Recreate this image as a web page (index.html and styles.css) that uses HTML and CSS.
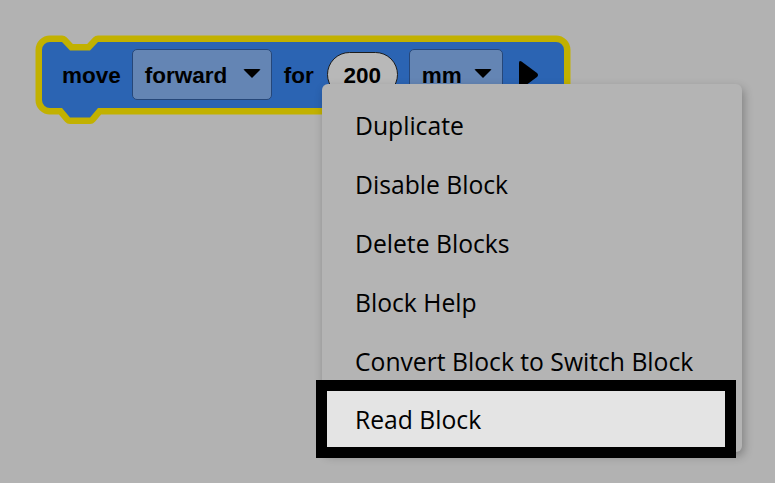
FILE: index.html
```html
<!DOCTYPE html>
<html>
<head>
<meta charset="utf-8">
<link rel="stylesheet" href="styles.css">
</head>
<body>
<div class="workspace">
  <div class="block">
    <svg class="block-shape" width="775" height="140" viewBox="0 0 775 140">
      <path d="M 50 42 H 62 L 70 50.5 H 90 L 98 42 H 556 A 8 8 0 0 1 564 50 V 100 A 8 8 0 0 1 556 108 H 98 L 90 117.5 H 70 L 62 108 H 50 A 8 8 0 0 1 42 100 V 50 A 8 8 0 0 1 50 42 Z" fill="#2b64b3" stroke="#c2b100" stroke-width="13" stroke-linejoin="round" paint-order="stroke"/>
    </svg>
    <div class="fields">
      <span class="label label-move">move</span>
      <span class="dropdown dd-forward"><span class="dd-text">forward</span><span class="caret"></span></span>
      <span class="label label-for">for</span>
      <span class="number"><span class="num-text">200</span></span>
      <span class="dropdown dd-mm"><span class="dd-text">mm</span><span class="caret"></span></span>
      <svg class="play" width="21" height="30" viewBox="0 0 21 30"><path d="M 3.5 1.5 Q 1 0 1 3 V 27 Q 1 30 3.5 28.5 L 19 17 Q 21 15 19 13 Z" fill="#000"/></svg>
    </div>
  </div>
  <div class="menu">
    <div class="item">Duplicate</div>
    <div class="item">Disable Block</div>
    <div class="item">Delete Blocks</div>
    <div class="item">Block Help</div>
    <div class="item">Convert Block to Switch Block</div>
    <div class="item item-focus">Read Block</div>
  </div>
</div>
</body>
</html>
```
FILE: styles.css
```css
html, body {
  margin: 0;
  padding: 0;
}
body {
  background: #b2b2b2;
  width: 775px;
  height: 483px;
  overflow: hidden;
}
.workspace {
  position: relative;
  width: 775px;
  height: 483px;
}
.block {
  position: absolute;
  left: 0;
  top: 0;
  width: 775px;
  height: 140px;
}
.block-shape {
  position: absolute;
  left: 0;
  top: 0;
}
.fields {
  position: relative;
  display: flex;
  align-items: center;
  padding-left: 62px;
  padding-top: 49px;
  height: 51px;
  font-family: "Liberation Sans", Arial, sans-serif;
  font-weight: bold;
  font-size: 22.5px;
  color: #000;
}
.label,
.dd-text,
.num-text {
  padding-top: 2px;
}
.label-move {
  margin-right: 11px;
}
.label-for {
  margin-left: 12px;
  margin-right: 13px;
}
.dropdown {
  box-sizing: border-box;
  height: 51px;
  display: flex;
  align-items: center;
  background: #6485b4;
  border: 1px solid #264779;
  border-radius: 5px;
  padding-left: 12px;
  padding-right: 10px;
}
.dd-forward {
  width: 140px;
}
.dd-mm {
  width: 94px;
  margin-left: 11px;
}
.caret {
  width: 0;
  height: 0;
  border-left: 9px solid transparent;
  border-right: 9px solid transparent;
  border-top: 9px solid #000;
  margin-left: auto;
  margin-top: -3px;
  border-radius: 2px;
}
.number {
  box-sizing: border-box;
  width: 71px;
  height: 45px;
  border: 1.5px solid #1c1c1c;
  border-radius: 23px;
  background: #b8b8b8;
  display: flex;
  align-items: center;
  justify-content: center;
}
.play {
  margin-left: 15px;
}
.menu {
  position: absolute;
  left: 322px;
  top: 84px;
  width: 420px;
  box-sizing: border-box;
  padding: 12px 17px 5px 5px;
  background: #b4b4b4;
  border-radius: 6px;
  box-shadow: 2px 4px 10px rgba(0, 0, 0, 0.28);
  font-family: "Open Sans", "Noto Sans", sans-serif;
  font-size: 24.7px;
  color: #000;
}
.item {
  height: 59px;
  display: flex;
  align-items: center;
  padding-left: 28px;
  white-space: nowrap;
}
.item-focus {
  height: 56px;
  background: #e4e4e4;
  outline: 11px solid #000;
}
```
